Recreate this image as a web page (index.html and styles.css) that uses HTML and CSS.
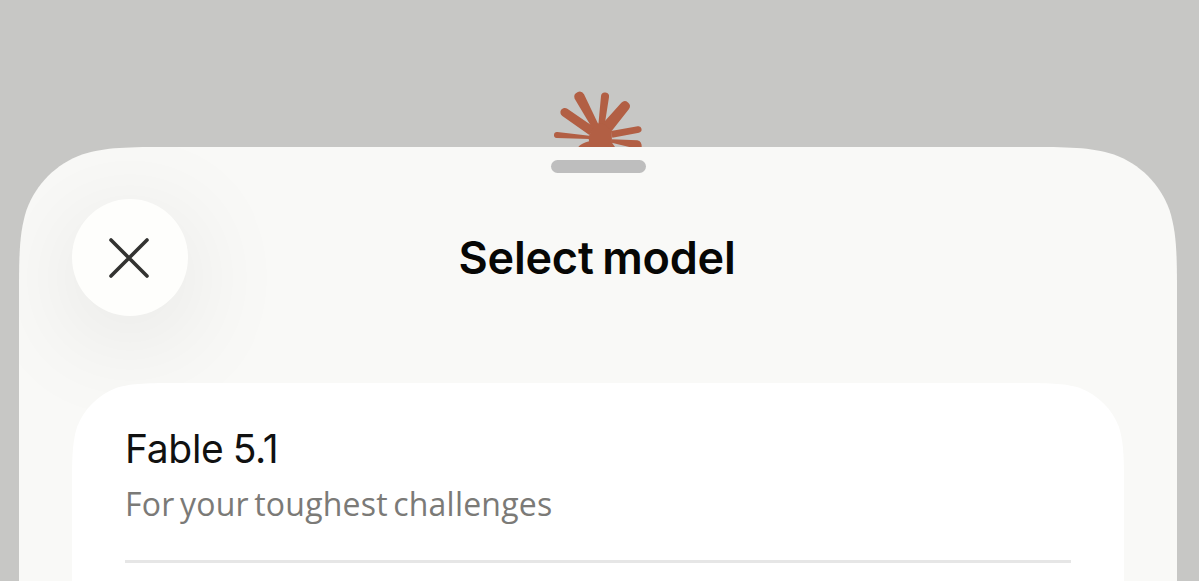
FILE: index.html
```
<!DOCTYPE html>
<html lang="en">
<head>
    <meta charset="UTF-8">
    <meta name="viewport" content="width=device-width, initial-scale=1.0">
    <title>Select model</title>
    <link rel="stylesheet" href="styles.css">
</head>
<body>
    <div class="backdrop">
        <svg class="logo" viewBox="60 30 300 171" aria-hidden="true">
            <path d="M82 156 L178 167 L178 177 L80 174 A9 9 0 0 1 82 156 Z"/>
            <path d="M112 86 L195 143 L178 165 L97 108 A13 13 0 0 1 112 86 Z"/>
            <path d="M162 43 L205 133 L190 150 L134 56 A15.500 15.500 0 0 1 162 43 Z"/>
            <path d="M237 51 L224 135 L205 135 L213 48 A12 12 0 0 1 237 51 Z"/>
            <path d="M297 87 L245 153 L214 135 L274 68 A15 15 0 0 1 297 87 Z"/>
            <path d="M327 158 L247 173 L243 153 L323 139 A9.500 9.500 0 0 1 327 158 Z"/>
            <path d="M245 178 L322 181 Q336 184 335 201 L298 201 L245 188 Z"/>
            <path d="M145 201 Q152 191 180 183 L200 201 Z"/>
            <path d="M178 164 L192 141 L206 130 L224 133 L245 152 L246 188 L255 201 L180 201 L176 176 Z"/>
        </svg>
    </div>

    <div class="sheet">
        <div class="handle"></div>
        <div class="header">
            <button class="close" aria-label="Close">
                <svg viewBox="0 0 40 40" aria-hidden="true">
                    <path d="M2 2 L38 38 M38 2 L2 38"/>
                </svg>
            </button>
            <h1>Select model</h1>
        </div>

        <div class="models">
            <div class="model">
                <div class="model-name">Fable 5.1</div>
                <div class="model-info">For your toughest challenges</div>
            </div>
        </div>
    </div>
</body>
</html>
```

FILE: styles.css
```
* {
    box-sizing: border-box;
}
body {
    margin: 0;
    height: 581px;
    overflow: hidden;
    background-color: #c7c7c5;
    font-family: Inter, sans-serif;
}
.backdrop {
    display: flex;
    justify-content: center;
    align-items: flex-end;
    height: 147px;
    padding-left: 1px;
}
.logo {
    width: 100px;
    height: 57px;
    fill: #b25f44;
}
.sheet {
    width: 1158px;
    height: 434px;
    margin-left: 19px;
    padding: 13px 53px 0;
    background-color: #f9f9f7;
    /* continuous corners, softer than a border-radius */
    clip-path: path("M0 434 V153 C0 109 0 87 7.500 63 C17 37 37 17 63 7.500 C87 0 109 0 153 0 H1005 C1049 0 1071 0 1095 7.500 C1121 17 1141 37 1150.500 63 C1158 87 1158 109 1158 153 V434 Z");
}
.handle {
    width: 95px;
    height: 13px;
    margin: 0 auto;
    border-radius: 7px;
    background-color: #bebebe;
}
.header {
    display: grid;
    grid-template-columns: 116px 1fr 118px;
    align-items: center;
    height: 117px;
    margin-top: 26px;
}
.close {
    display: flex;
    align-items: center;
    justify-content: center;
    width: 116px;
    height: 117px;
    padding: 0 2px 0 0;
    border: none;
    border-radius: 50%;
    background-color: #fefefc;
    box-shadow: 0 20px 110px rgba(0, 0, 0, 0.1);
    cursor: pointer;
}
.close svg {
    width: 40px;
    height: 40px;
    fill: none;
    stroke: #333331;
    stroke-width: 3.6;
    stroke-linecap: round;
}
h1 {
    margin: 0;
    text-align: center;
    font-size: 45px;
    font-weight: 600;
    line-height: 56px;
    letter-spacing: -0.2px;
    word-spacing: -2.5px;
    color: #070705;
}
.models {
    position: relative;
    height: 198px;
    margin-top: 67px;
    padding: 0 53px;
    background-color: #fff;
    clip-path: path("M0 198 V107 C0 76 0 61 5 44 C12 26 26 12 44 5 C61 0 76 0 107 0 H945 C976 0 991 0 1008 5 C1026 12 1040 26 1047 44 C1052 61 1052 76 1052 107 V198 Z");
}
.model {
    height: 180px;
    padding-top: 41px;
    border-bottom: 3px solid #e6e6e6;
}
.model-name {
    font-size: 39px;
    line-height: 50px;
    letter-spacing: -0.3px;
    word-spacing: -1.5px;
    color: #111;
}
.model-info {
    margin-top: 7px;
    font-family: "Open Sans", sans-serif;
    font-size: 32px;
    line-height: 46px;
    letter-spacing: 0.2px;
    word-spacing: -3px;
    color: #7b7a77;
}
```
